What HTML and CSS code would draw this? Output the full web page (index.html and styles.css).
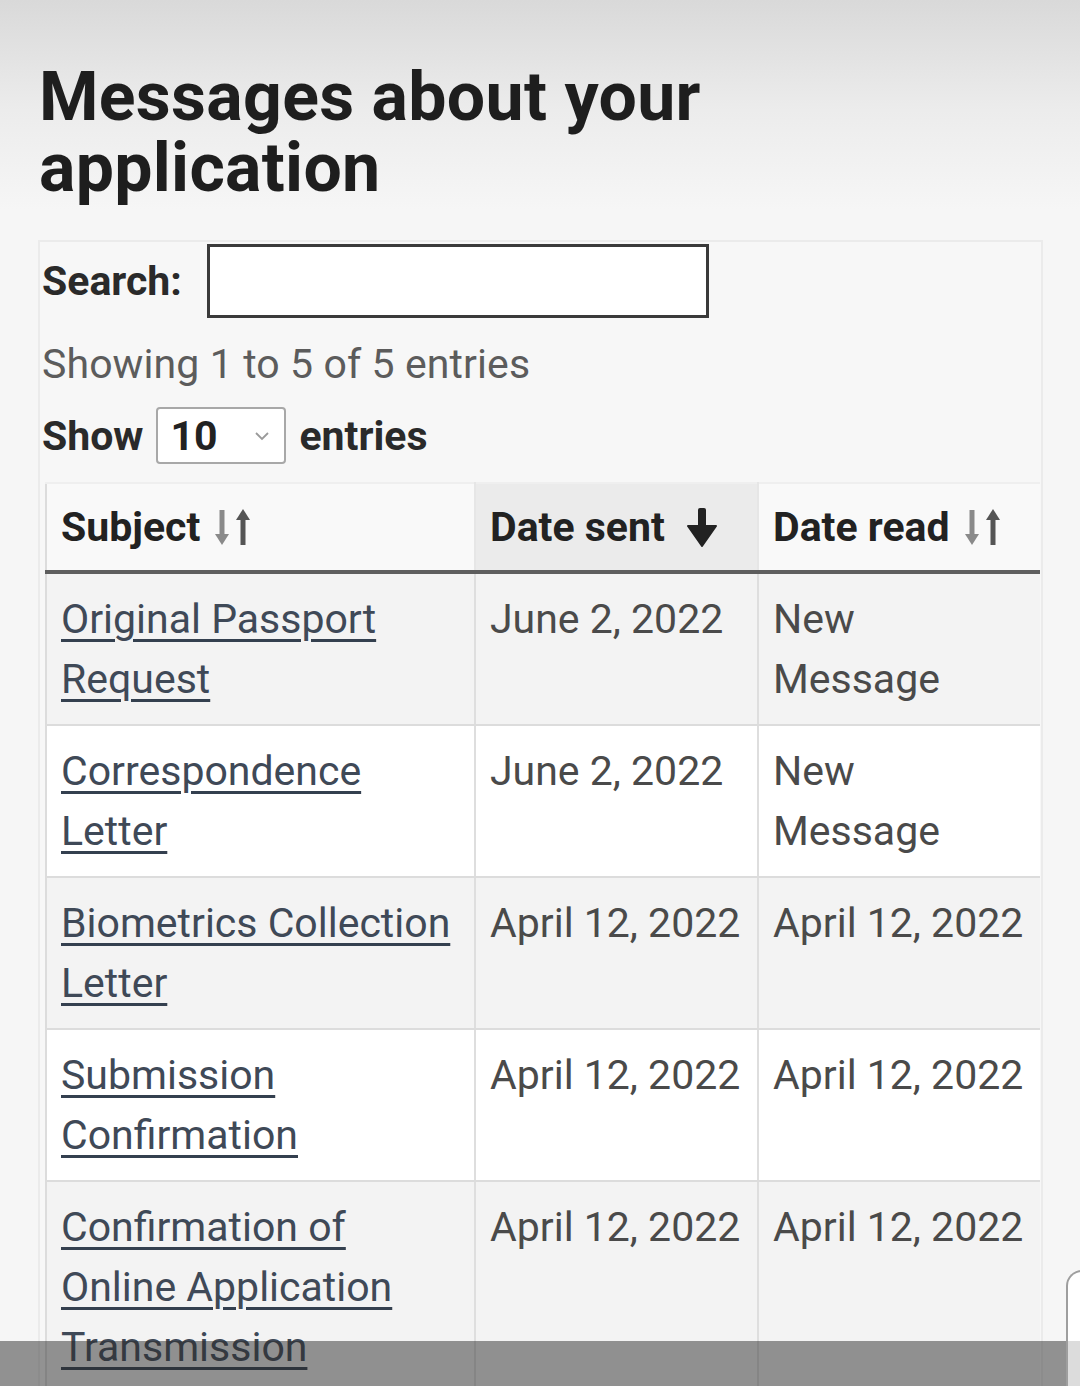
FILE: index.html
```html
<!DOCTYPE html>
<html lang="en">
<head>
<meta charset="utf-8">
<title>Messages about your application</title>
<link rel="stylesheet" href="styles.css">
</head>
<body>
<main class="page">
  <h1 class="title">Messages about your application</h1>
  <section class="panel">
    <div class="search-row">
      <label class="search-label" for="q">Search:</label>
      <input id="q" class="search-input" type="text">
    </div>
    <div class="info">Showing 1 to 5 of 5 entries</div>
    <div class="length-row">
      <span class="bold-label">Show</span>
      <div class="select">
        <span class="select-value">10</span>
        <svg class="chev" width="16" height="10" viewBox="0 0 16 10"><path d="M2 2 L8 8 L14 2" fill="none" stroke="#9a9a9a" stroke-width="1.8"/></svg>
      </div>
      <span class="bold-label">entries</span>
    </div>
    <table class="grid">
      <colgroup>
        <col class="c1"><col class="c2"><col class="c3">
      </colgroup>
      <thead>
        <tr>
          <th><span class="th-in">Subject
            <svg class="sort" width="40" height="40" viewBox="0 0 40 40"><path d="M10 3 V32" stroke="#8a8a8a" stroke-width="5"/><path d="M3 27 L17 27 L10 38 Z" fill="#8a8a8a"/><path d="M31 8 V38" stroke="#555" stroke-width="5"/><path d="M24 13 L38 13 L31 2 Z" fill="#555"/></svg></span></th>
          <th class="sorted"><span class="th-in">Date sent
            <svg class="sort-one" width="30" height="40" viewBox="0 0 30 40"><rect x="11" y="1" width="8" height="22" rx="2" fill="#222"/><path d="M1 19 L29 19 L15 39 Z" fill="#222" stroke="#222" stroke-width="2" stroke-linejoin="round"/></svg></span></th>
          <th><span class="th-in">Date read
            <svg class="sort" width="40" height="40" viewBox="0 0 40 40"><path d="M10 3 V32" stroke="#8a8a8a" stroke-width="5"/><path d="M3 27 L17 27 L10 38 Z" fill="#8a8a8a"/><path d="M31 8 V38" stroke="#555" stroke-width="5"/><path d="M24 13 L38 13 L31 2 Z" fill="#555"/></svg></span></th>
        </tr>
      </thead>
      <tbody>
        <tr class="odd">
          <td><a href="#">Original Passport Request</a></td>
          <td>June 2, 2022</td>
          <td>New Message</td>
        </tr>
        <tr>
          <td><a href="#">Correspondence Letter</a></td>
          <td>June 2, 2022</td>
          <td>New Message</td>
        </tr>
        <tr class="odd">
          <td><a href="#">Biometrics Collection Letter</a></td>
          <td>April 12, 2022</td>
          <td>April 12, 2022</td>
        </tr>
        <tr>
          <td><a href="#">Submission Confirmation</a></td>
          <td>April 12, 2022</td>
          <td>April 12, 2022</td>
        </tr>
        <tr class="odd">
          <td><a href="#">Confirmation of Online Application Transmission</a></td>
          <td>April 12, 2022</td>
          <td>April 12, 2022</td>
        </tr>
      </tbody>
    </table>
  </section>
</main>
<div class="nav-shade"></div>
<div class="side-card"></div>
</body>
</html>
```

FILE: styles.css
```css
html, body {
  margin: 0;
  padding: 0;
}
body {
  font-family: Roboto, "Liberation Sans", Arial, sans-serif;
  background: linear-gradient(to bottom, #d9d9d9 0px, #ececec 110px, #f6f6f6 210px, #f6f6f6 100%);
  background-color: #f6f6f6;
  color: #333;
  width: 1080px;
  overflow: hidden;
}
.page {
  padding: 0 37px 0 38px;
}
.title {
  margin: 62px 0 0 1px;
  font-size: 68px;
  line-height: 71px;
  font-weight: 700;
  color: #1e1e1e;
  letter-spacing: 0.3px;
  width: 760px;
}
.panel {
  margin-top: 36px;
  background: #f7f7f7;
  border: 2px solid #ebebeb;
  border-bottom: none;
  padding: 2px 0 0 2px;
}
.search-row {
  display: flex;
  align-items: center;
  gap: 25px;
  height: 74px;
}
.search-label {
  font-size: 41px;
  font-weight: 700;
  color: #2a2a2a;
}
.search-input {
  box-sizing: border-box;
  width: 502px;
  height: 74px;
  margin: 0;
  border: 3px solid #3a3a3a;
  background: #fff;
  padding: 0 10px;
  font: inherit;
}
.info {
  margin-top: 16px;
  font-size: 41px;
  line-height: 60px;
  color: #5c5c5c;
  letter-spacing: 0.1px;
}
.length-row {
  display: flex;
  align-items: center;
  gap: 13px;
  margin-top: 13px;
  height: 57px;
}
.bold-label {
  font-size: 41px;
  font-weight: 700;
  color: #2a2a2a;
}
.select {
  box-sizing: border-box;
  width: 130px;
  height: 57px;
  border: 2px solid #a8a8a8;
  border-radius: 4px;
  background: #fff;
  display: flex;
  align-items: center;
  justify-content: space-between;
  padding: 0 14px 0 12px;
}
.select-value {
  font-size: 41px;
  font-weight: 700;
  color: #222;
}
.grid {
  margin: 18px 0 0 3px;
  width: 994px;
  border-collapse: collapse;
  table-layout: fixed;
  border-left: 2px solid #dcdcdc;
  font-size: 41px;
  line-height: 60px;
}
.c1 { width: 429px; }
.c2 { width: 283px; }
.c3 { width: 282px; }
.grid th {
  text-align: left;
  padding: 13px 12px 13px 14px;
  background: #f9f9f9;
  font-weight: 700;
  color: #222;
  border-right: 2px solid #e6e6e6;
  border-bottom: 4px solid #5e5e5e;
  border-top: 2px solid #efefef;
  white-space: nowrap;
}
.grid th:last-child {
  border-right: none;
}
.grid th.sorted {
  background: #ebebeb;
}
.th-in {
  display: inline-flex;
  align-items: center;
  gap: 12px;
}
.sort, .sort-one {
  flex: none;
}
.sort-one {
  margin-left: 10px;
}
.grid td {
  vertical-align: top;
  padding: 15px 12px 15px 14px;
  border-right: 2px solid #dedede;
  border-bottom: 2px solid #dcdcdc;
  color: #4a4a4a;
  background: #fff;
}
.grid td:last-child {
  border-right: none;
}
.grid tr.odd td {
  background: #f3f3f3;
}
.grid a {
  color: #3f4957;
  text-decoration: underline;
  text-decoration-thickness: 3px;
  text-underline-offset: 6px;
  text-decoration-color: #34404f;
}
.nav-shade {
  position: fixed;
  left: 0;
  bottom: 0;
  width: 1066px;
  height: 45px;
  background: rgba(40, 40, 40, 0.49);
}
.side-card {
  position: fixed;
  left: 1066px;
  top: 1270px;
  width: 40px;
  height: 140px;
  box-sizing: border-box;
  border: 2px solid #9e9e9e;
  border-right: none;
  border-bottom: none;
  border-radius: 16px 0 0 0;
  background: linear-gradient(to bottom, #ffffff 0px, #ffffff 69px, #dcdcdc 69px);
}
```
